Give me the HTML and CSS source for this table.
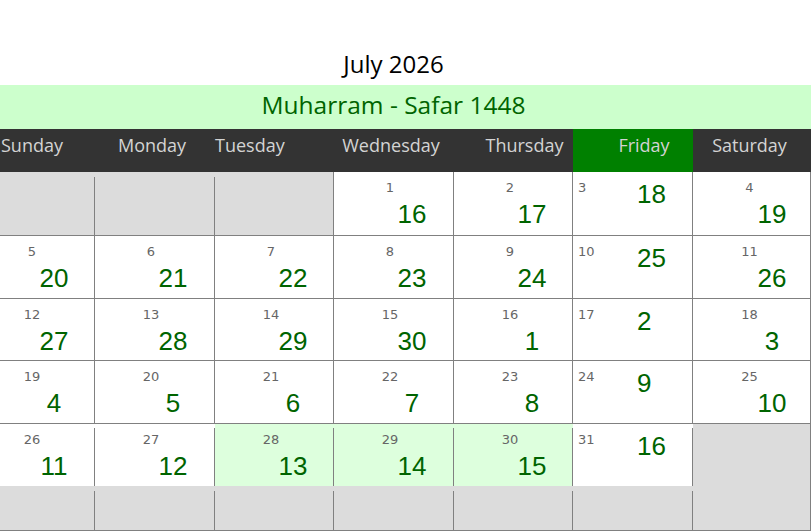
FILE: index.html
```html
<!DOCTYPE html>
<html lang="en">
<head>
<meta charset="utf-8">
<title>July 2026</title>
<link rel="stylesheet" href="styles.css">
</head>
<body>
<div class="cal">
  <div class="title">July 2026</div>
  <div class="hijri">Muharram - Safar 1448</div>
  <div class="head">
    <div class="hd h-sun">Sunday</div>
    <div class="hd h-mon">Monday</div>
    <div class="hd h-tue">Tuesday</div>
    <div class="hd h-wed">Wednesday</div>
    <div class="hd h-thu">Thursday</div>
    <div class="hd h-fri">Friday</div>
    <div class="hd h-sat">Saturday</div>
  </div>
  <div class="grid">
    <div class="c empty top"></div>
    <div class="c empty top"></div>
    <div class="c empty top full"></div>
    <div class="c"><div class="d">1</div><div class="h">16</div></div>
    <div class="c"><div class="d">2</div><div class="h">17</div></div>
    <div class="c fri"><div class="d">3</div><div class="h">18</div></div>
    <div class="c sat"><div class="d">4</div><div class="h">19</div></div>

    <div class="c"><div class="d">5</div><div class="h">20</div></div>
    <div class="c"><div class="d">6</div><div class="h">21</div></div>
    <div class="c"><div class="d">7</div><div class="h">22</div></div>
    <div class="c"><div class="d">8</div><div class="h">23</div></div>
    <div class="c"><div class="d">9</div><div class="h">24</div></div>
    <div class="c fri"><div class="d">10</div><div class="h">25</div></div>
    <div class="c sat"><div class="d">11</div><div class="h">26</div></div>

    <div class="c"><div class="d">12</div><div class="h">27</div></div>
    <div class="c"><div class="d">13</div><div class="h">28</div></div>
    <div class="c"><div class="d">14</div><div class="h">29</div></div>
    <div class="c"><div class="d">15</div><div class="h">30</div></div>
    <div class="c"><div class="d">16</div><div class="h">1</div></div>
    <div class="c fri"><div class="d">17</div><div class="h">2</div></div>
    <div class="c sat"><div class="d">18</div><div class="h">3</div></div>

    <div class="c"><div class="d">19</div><div class="h">4</div></div>
    <div class="c"><div class="d">20</div><div class="h">5</div></div>
    <div class="c"><div class="d">21</div><div class="h">6</div></div>
    <div class="c"><div class="d">22</div><div class="h">7</div></div>
    <div class="c"><div class="d">23</div><div class="h">8</div></div>
    <div class="c fri"><div class="d">24</div><div class="h">9</div></div>
    <div class="c sat"><div class="d">25</div><div class="h">10</div></div>

    <div class="c last"><div class="d">26</div><div class="h">11</div></div>
    <div class="c last"><div class="d">27</div><div class="h">12</div></div>
    <div class="c last hl"><div class="d">28</div><div class="h">13</div></div>
    <div class="c last hl"><div class="d">29</div><div class="h">14</div></div>
    <div class="c last hl"><div class="d">30</div><div class="h">15</div></div>
    <div class="c last fri"><div class="d">31</div><div class="h">16</div></div>
    <div class="c blank"></div>

    <div class="c empty bottom"></div>
    <div class="c empty bottom"></div>
    <div class="c empty bottom"></div>
    <div class="c empty bottom"></div>
    <div class="c empty bottom"></div>
    <div class="c empty bottom"></div>
    <div class="c empty bottom full"></div>
  </div>
</div>
</body>
</html>
```

FILE: styles.css
```css
* { box-sizing: border-box; }

body {
  margin: 0;
  background: #ffffff;
  font-family: "Open Sans", "Noto Sans", sans-serif;
}

.cal {
  width: 835px;
  margin-left: -24px;
}

.title {
  margin: 48px 0 5px;
  font-size: 24px;
  line-height: 32px;
  text-align: center;
  color: #000000;
}

.hijri {
  background: #ccffcc;
  color: #006400;
  font-size: 24.5px;
  line-height: 40px;
  padding-bottom: 4px;
  text-align: center;
}

.head,
.grid {
  display: grid;
  grid-template-columns: 119px 120px 119px 120px 119px 120px 118px;
}

.head {
  background: #333333;
  height: 43px;
}

.hd {
  color: #d3d3d3;
  font-size: 18px;
  line-height: 24px;
  padding-top: 4px;
  text-align: center;
  white-space: nowrap;
}

.h-sun { padding-right: 7px; }
.h-mon { padding-right: 6px; }
.h-tue { padding-right: 51px; }
.h-wed { padding-right: 6px; }
.h-thu { padding-left: 22px; }
.h-fri { padding-left: 22px; background: #008000; }
.h-sat { padding-right: 5px; }

.grid {
  grid-template-rows: 64px 63px 62px 63px 62px 45px;
}

.c {
  background: #ffffff;
  border-right: 1px solid #808080;
  border-bottom: 1px solid #808080;
  font-family: "Liberation Sans", Arial, sans-serif;
}

.d {
  width: 112px;
  padding-top: 8px;
  font-family: "DejaVu Sans", Verdana, sans-serif;
  font-size: 13px;
  line-height: 15px;
  color: #666666;
  text-align: center;
}

.h {
  width: 80px;
  margin: 4px 0 0 38px;
  font-size: 26px;
  line-height: 30px;
  color: #006400;
  text-align: center;
}

.sat .d { width: 113px; }
.sat .h { margin-left: 39px; }

.fri {
  display: flex;
  align-items: flex-start;
}

.fri .d {
  width: 64px;
  padding-left: 5px;
  text-align: left;
}

.fri .h {
  width: auto;
  margin: 0;
  padding-top: 7px;
  text-align: left;
}

/* empty cells: grey fill, divider starts a little below the top */
.empty {
  border-right: none;
  background: linear-gradient(#808080, #808080) right bottom / 1px calc(100% - 5px) no-repeat, #dcdcdc;
}

.empty.top { border-bottom: 1px solid #808080; }
.empty.bottom { border-bottom: 1px solid #808080; }
.empty.full {
  background: #dcdcdc;
  border-right: 1px solid #808080;
}

/* last row of dates: no bottom rule, divider starts 4px down */
.last {
  border-right: none;
  border-bottom: none;
  background: linear-gradient(#808080, #808080) right bottom / 1px calc(100% - 4px) no-repeat, #ffffff;
}

.last.hl {
  background: linear-gradient(#808080, #808080) right bottom / 1px calc(100% - 4px) no-repeat, #ddffdd;
}

.blank {
  background: #dcdcdc;
  border-bottom: none;
}
```
